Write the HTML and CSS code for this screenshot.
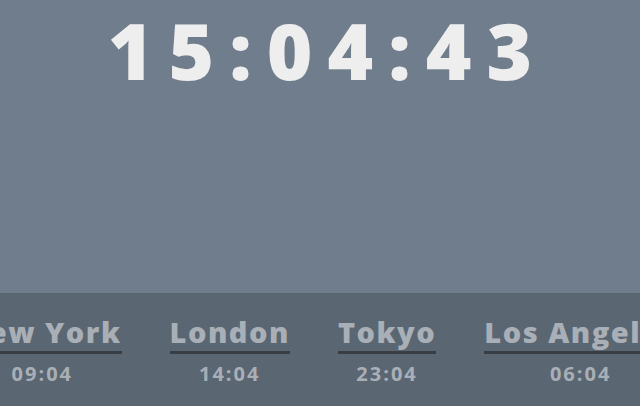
FILE: index.html
```html
<!DOCTYPE html>
<html>
<head>
<meta charset="utf-8">
<link rel="stylesheet" href="styles.css">
</head>
<body>
<main class="page">
  <section class="hero">
    <div class="clock">15:04:43</div>
  </section>
  <section class="zones">
    <div class="zone">
      <div class="city">New York</div>
      <div class="time">09:04</div>
    </div>
    <div class="zone">
      <div class="city">London</div>
      <div class="time">14:04</div>
    </div>
    <div class="zone">
      <div class="city">Tokyo</div>
      <div class="time">23:04</div>
    </div>
    <div class="zone">
      <div class="city">Los Angeles</div>
      <div class="time">06:04</div>
    </div>
  </section>
</main>
</body>
</html>
```
FILE: styles.css
```css
html, body {
  margin: 0;
  padding: 0;
}
body {
  width: 640px;
  height: 406px;
  overflow: hidden;
  background: #6f7d8c;
  font-family: "Open Sans", "Liberation Sans", sans-serif;
}
.page {
  display: flex;
  flex-direction: column;
  height: 406px;
}
.hero {
  height: 293px;
  display: flex;
  justify-content: center;
  align-items: flex-start;
}
.clock {
  padding-left: 15px;
  font-size: 78px;
  font-weight: 800;
  letter-spacing: 15px;
  color: #eeeeee;
  line-height: 100px;
}
.zones {
  flex: 1;
  background: #5b6673;
  display: flex;
  justify-content: center;
  overflow: hidden;
  padding-top: 20px;
}
.zone {
  flex: none;
  margin: 0 24px;
  display: flex;
  flex-direction: column;
  align-items: center;
}
.city {
  font-size: 29px;
  font-weight: 800;
  letter-spacing: 1.5px;
  color: #a9afb6;
  line-height: 38px;
  padding-bottom: 0;
  border-bottom: 3px solid #393e45;
  white-space: nowrap;
}
.time {
  margin-top: 8px;
  font-size: 20px;
  font-weight: 700;
  letter-spacing: 2px;
  color: #a9afb6;
  line-height: 24px;
}
```
